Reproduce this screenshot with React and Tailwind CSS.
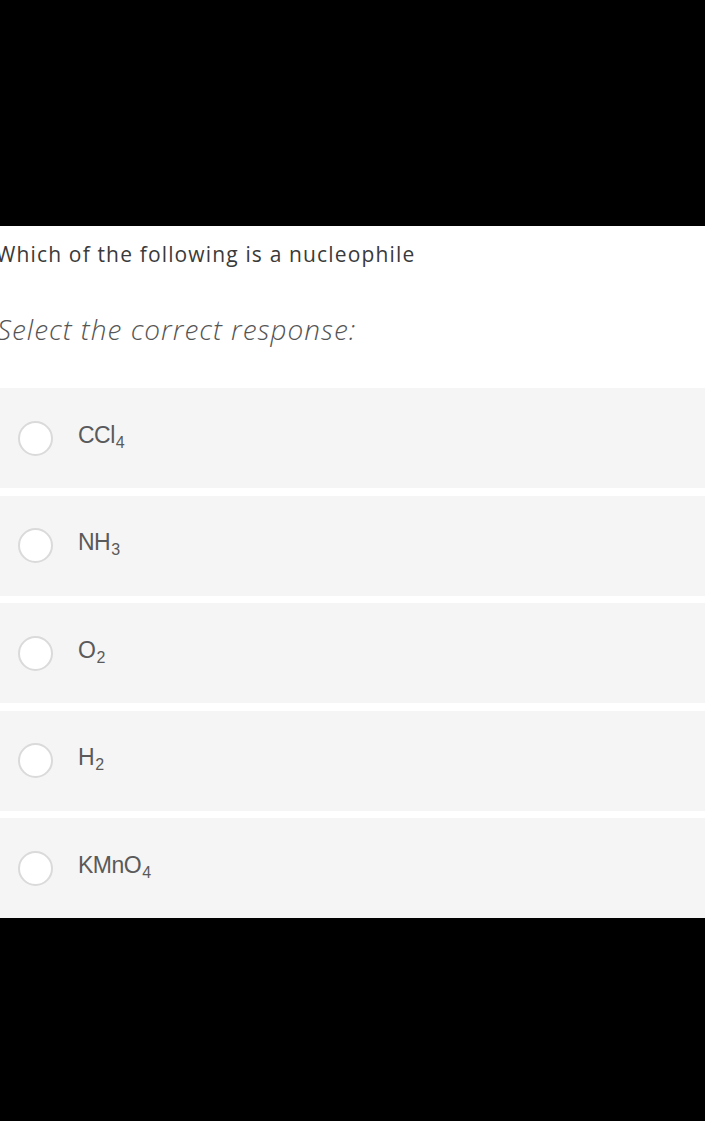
const options = [
  { base: "CCl", sub: "4" },
  { base: "NH", sub: "3" },
  { base: "O", sub: "2" },
  { base: "H", sub: "2" },
  { base: "KMnO", sub: "4" },
];

const Option = ({ base, sub }) => (
  <div className="flex items-center h-[100px] bg-[#f5f5f5]">
    <span className="ml-[18px] w-[35px] h-[35px] rounded-full border-2 border-[#dadada] bg-white shrink-0" />
    <span
      className="ml-[25px] mt-[-6px] text-[23px] leading-none text-[#5a5a5a] tracking-[-0.5px]"
      style={{ fontFamily: '"Liberation Sans", Arial, sans-serif' }}
    >
      {base}
      <sub className="text-[16px] relative top-[5px] ml-[1px]">{sub}</sub>
    </span>
  </div>
);

export default function App() {
  return (
    <div className="w-[705px] h-[1121px] bg-black flex flex-col overflow-hidden">
      <div className="h-[226px] shrink-0" />

      <div className="bg-white flex flex-col" style={{ fontFamily: '"Open Sans", sans-serif' }}>
        <p className="ml-[-4px] mt-[14px] text-[21px] leading-[28px] tracking-[1.15px] text-[#3a3a3a]">
          Which of the following is a nucleophile
        </p>
        <p className="ml-[-3px] mt-[44px] text-[28px] leading-[34px] italic font-light tracking-[1px] text-[#555]">
          Select the correct response:
        </p>

        <div className="mt-[42px] flex flex-col gap-[7.5px]">
          {options.map((o) => (
            <Option key={o.base} {...o} />
          ))}
        </div>
      </div>
    </div>
  );
}
